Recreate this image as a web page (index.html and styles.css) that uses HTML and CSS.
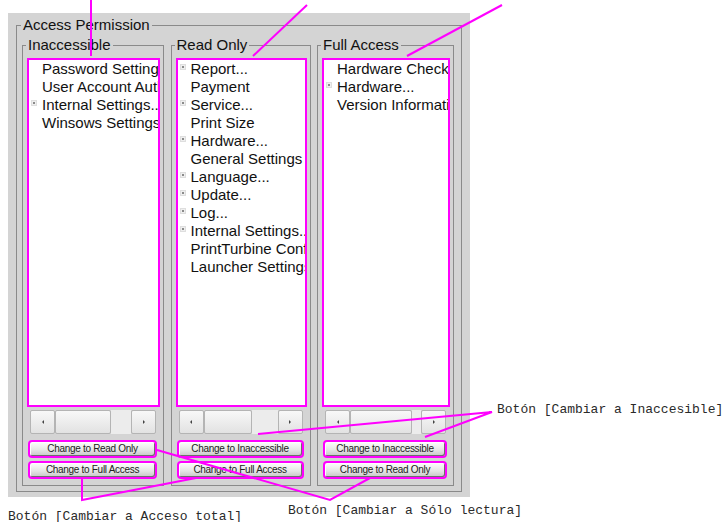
FILE: index.html
```html
<!DOCTYPE html>
<html lang="es">
<head>
  <meta charset="UTF-8">
  <title>Access Permission</title>
  <link rel="stylesheet" href="styles.css">
</head>
<body>

  <div class="panel">
    <fieldset class="outer">
      <legend>Access Permission</legend>

      <div class="columns">

        <!-- Inaccessible -->
        <fieldset class="group col-1">
          <legend>Inaccessible</legend>
          <div class="list">
            <div class="item"><span class="exp"></span>Password Settings</div>
            <div class="item"><span class="exp"></span>User Account Authentication</div>
            <div class="item"><span class="exp on"></span>Internal Settings...</div>
            <div class="item"><span class="exp"></span>Winsows Settings</div>
          </div>
          <div class="scroll">
            <span class="arrow left"></span>
            <span class="thumb"></span>
            <span class="track"></span>
            <span class="arrow right"></span>
          </div>
          <button class="btn first">Change to Read Only</button>
          <button class="btn">Change to Full Access</button>
        </fieldset>

        <!-- Read Only -->
        <fieldset class="group col-2">
          <legend>Read Only</legend>
          <div class="list">
            <div class="item"><span class="exp on"></span>Report...</div>
            <div class="item"><span class="exp"></span>Payment</div>
            <div class="item"><span class="exp on"></span>Service...</div>
            <div class="item"><span class="exp"></span>Print Size</div>
            <div class="item"><span class="exp on"></span>Hardware...</div>
            <div class="item"><span class="exp"></span>General Settings</div>
            <div class="item"><span class="exp on"></span>Language...</div>
            <div class="item"><span class="exp on"></span>Update...</div>
            <div class="item"><span class="exp on"></span>Log...</div>
            <div class="item"><span class="exp on"></span>Internal Settings...</div>
            <div class="item"><span class="exp"></span>PrintTurbine Configuration</div>
            <div class="item"><span class="exp"></span>Launcher Settings</div>
          </div>
          <div class="scroll">
            <span class="arrow left"></span>
            <span class="thumb"></span>
            <span class="track"></span>
            <span class="arrow right"></span>
          </div>
          <button class="btn first">Change to Inaccessible</button>
          <button class="btn">Change to Full Access</button>
        </fieldset>

        <!-- Full Access -->
        <fieldset class="group col-3">
          <legend>Full Access</legend>
          <div class="list">
            <div class="item"><span class="exp"></span>Hardware Check</div>
            <div class="item"><span class="exp on"></span>Hardware...</div>
            <div class="item"><span class="exp"></span>Version Information</div>
          </div>
          <div class="scroll">
            <span class="arrow left"></span>
            <span class="thumb"></span>
            <span class="track"></span>
            <span class="arrow right"></span>
          </div>
          <button class="btn first">Change to Inaccessible</button>
          <button class="btn">Change to Read Only</button>
        </fieldset>

      </div>
    </fieldset>
  </div>

  <!-- callouts drawn over the screenshot -->
  <svg class="callouts" width="728" height="522" viewBox="0 0 728 522">
    <g stroke="#f0f" stroke-width="2" fill="none">
      <line x1="91" y1="0" x2="91" y2="56"/>
      <line x1="307" y1="5" x2="253" y2="56"/>
      <line x1="502" y1="5" x2="407" y2="56"/>
      <polyline points="258,434 492,412 425,437"/>
      <polyline points="82,478 82,500 196,478"/>
      <polyline points="157,450 330,500 370,478"/>
    </g>
  </svg>

  <div class="note note-inacc">Botón [Cambiar a Inaccesible]</div>
  <div class="note note-read">Botón [Cambiar a Sólo lectura]</div>
  <div class="note note-full">Botón [Cambiar a Acceso total]</div>

</body>
</html>
```

FILE: styles.css
```css
body {
  margin: 0;
  position: relative;
  width: 728px;
  height: 522px;
  overflow: hidden;
  background: #fff;
  font-family: "Liberation Sans", Arial, sans-serif;
  color: #111;
}

.panel {
  width: 462px;
  margin: 13px 0 0 8px;
  padding: 3px 8px 5px;
  box-sizing: border-box;
  background: #d4d4d4;
}

fieldset {
  margin: 0;
  min-width: 0;
  border: 1px solid #8a8a8a;
  box-sizing: border-box;
}
legend {
  font-size: 15px;
  line-height: 18px;
  padding: 0 2px;
  margin-left: -1px;
}

.outer {
  padding: 2px 7px 5px 5px;
}

.columns {
  display: flex;
  justify-content: space-between;
}

.group {
  padding: 2px 3px 6px 4px;
}
.col-1 { width: 142px; }
.col-2 { width: 140px; }
.col-3 { width: 137px; }

.list {
  height: 349px;
  margin-top: 2px;
  box-sizing: border-box;
  border: 2px solid #f0f;
  background: #fff;
  overflow: hidden;
}
.item {
  display: flex;
  height: 18px;
  line-height: 18px;
  font-size: 15px;
  white-space: nowrap;
}
.exp {
  flex: none;
  width: 13px;
}
.exp.on::before {
  content: "";
  display: block;
  width: 4px;
  height: 4px;
  margin: 4px 0 0 2px;
  border: 1px solid #dedede;
  background: radial-gradient(circle, #8a8a8a 0 1px, #efefef 1.5px);
}

.scroll {
  display: flex;
  height: 24px;
  margin: 3px 4px 0 3px;
}
.arrow,
.thumb {
  box-sizing: border-box;
  border: 1px solid #b4b4b4;
  border-radius: 2px;
  background: linear-gradient(#f8f8f8, #e2e2e2);
}
.arrow {
  flex: none;
  width: 25px;
  display: flex;
  align-items: center;
  justify-content: center;
}
.arrow::before {
  content: "";
  border-top: 2px solid transparent;
  border-bottom: 2px solid transparent;
}
.arrow.left::before { border-right: 2px solid #444; }
.arrow.right::before { border-left: 2px solid #444; }
.thumb {
  flex: none;
  width: 56px;
}
.col-2 .thumb { width: 48px; }
.col-3 .thumb { width: 62px; }
.track {
  flex: 1;
  background: #ececec;
}

.btn {
  display: block;
  width: calc(100% - 4px);
  height: 18px;
  margin: 3px 3px 0 1px;
  padding: 0;
  border: 2px solid #f0f;
  border-radius: 4px;
  background: linear-gradient(#fdfdfd, #e6e6e6 55%, #c6c6c6);
  box-shadow: inset -1px -1px 0 #6e6e6e, inset 1px 1px 0 #fff;
  font-family: "Liberation Sans", Arial, sans-serif;
  font-size: 10px;
  letter-spacing: -0.3px;
  line-height: 14px;
  color: #222;
}
.btn.first {
  margin-top: 6px;
}

.callouts {
  position: absolute;
  left: 0;
  top: 0;
  pointer-events: none;
}

.note {
  position: absolute;
  font-family: "Liberation Mono", "Courier New", monospace;
  font-size: 13px;
  line-height: 15px;
  color: #2a2a2a;
  white-space: nowrap;
}
.note-inacc { left: 497px; top: 402px; }
.note-read { left: 288px; top: 503px; }
.note-full { left: 8px; top: 509px; }
```
